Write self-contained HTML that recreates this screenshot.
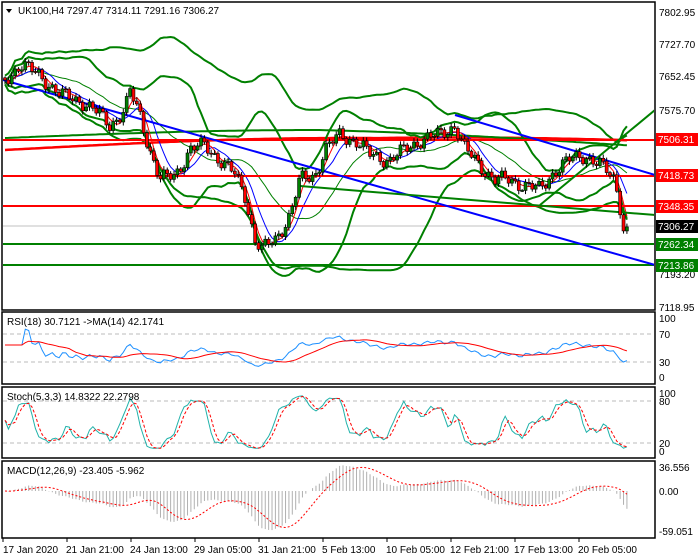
<!DOCTYPE html>
<html><head><meta charset="utf-8"><style>
html,body{margin:0;padding:0;background:#fff;}
body{width:700px;height:560px;overflow:hidden;font-family:"Liberation Sans",sans-serif;}
svg{display:block}
text{font-family:"Liberation Sans",sans-serif;font-size:10px;fill:#000}
</style></head><body>
<svg id="s" width="700" height="560" viewBox="0 0 700 560" xmlns="http://www.w3.org/2000/svg">
<rect width="700" height="560" fill="#fff"/>
<g id="plot"></g>
<g fill="none" stroke="#000" stroke-width="1.5">
<rect x="2" y="2" width="653" height="308"/>
<rect x="2" y="312" width="653" height="72"/>
<rect x="2" y="387" width="653" height="71"/>
<rect x="2" y="461" width="653" height="77"/>
</g>
<g stroke="#bbb" stroke-dasharray="4,3" stroke-width="1">
<line x1="3" y1="334" x2="654" y2="334"/><line x1="3" y1="362" x2="654" y2="362"/>
<line x1="3" y1="401" x2="654" y2="401"/><line x1="3" y1="443" x2="654" y2="443"/>
</g>
<g id="ind"></g>
<path d="M6 9 L12 9 L9 13 Z" fill="#000"/>
<text x="18" y="14">UK100,H4  7297.47 7314.11 7291.16 7306.27</text>
<text x="7" y="325">RSI(18) 30.7121  -&gt;MA(14) 42.1741</text>
<text x="7" y="400">Stoch(5,3,3) 14.8322 22.2798</text>
<text x="7" y="474">MACD(12,26,9) -23.405 -5.962</text>
<g>
<text x="659" y="16">7802.95</text>
<text x="659" y="48">7727.70</text>
<text x="659" y="80">7652.45</text>
<text x="659" y="114">7575.70</text>
<text x="659" y="278">7193.20</text>
<text x="659" y="311">7118.95</text>
<text x="659" y="322">100</text><text x="659" y="338">70</text><text x="659" y="366">30</text><text x="659" y="381">0</text>
<text x="659" y="397">100</text><text x="659" y="405">80</text><text x="659" y="447">20</text><text x="659" y="455">0</text>
<text x="659" y="471">36.556</text><text x="659" y="495">0.00</text><text x="659" y="535">-59.051</text>
<rect x="656" y="133" width="42" height="13" fill="#f00"/><text x="658" y="143" style="fill:#fff">7506.31</text>
<rect x="656" y="169" width="42" height="13" fill="#f00"/><text x="658" y="179" style="fill:#fff">7418.73</text>
<rect x="656" y="200" width="42" height="13" fill="#f00"/><text x="658" y="210" style="fill:#fff">7348.35</text>
<rect x="656" y="220" width="42" height="13" fill="#000"/><text x="658" y="230" style="fill:#fff">7306.27</text>
<rect x="656" y="238" width="42" height="13" fill="#008000"/><text x="658" y="248" style="fill:#fff">7262.34</text>
<rect x="656" y="259" width="42" height="13" fill="#008000"/><text x="658" y="269" style="fill:#fff">7213.86</text>
</g>
<g stroke="#000" stroke-width="1">
<line x1="3" y1="538" x2="3" y2="542"/><line x1="67" y1="538" x2="67" y2="542"/><line x1="131" y1="538" x2="131" y2="542"/><line x1="195" y1="538" x2="195" y2="542"/><line x1="259" y1="538" x2="259" y2="542"/><line x1="323" y1="538" x2="323" y2="542"/><line x1="387" y1="538" x2="387" y2="542"/><line x1="451" y1="538" x2="451" y2="542"/><line x1="515" y1="538" x2="515" y2="542"/><line x1="579" y1="538" x2="579" y2="542"/>
</g>
<text x="3" y="553">17 Jan 2020</text><text x="66" y="553">21 Jan 21:00</text><text x="130" y="553">24 Jan 13:00</text><text x="194" y="553">29 Jan 05:00</text><text x="258" y="553">31 Jan 21:00</text><text x="322" y="553">5 Feb 13:00</text><text x="386" y="553">10 Feb 05:00</text><text x="450" y="553">12 Feb 21:00</text><text x="514" y="553">17 Feb 13:00</text><text x="578" y="553">20 Feb 05:00</text>
</svg>
<script>
(function(){
var NS="http://www.w3.org/2000/svg";
var plot=document.getElementById('plot'),ind=document.getElementById('ind');
function el(p,n,a){var e=document.createElementNS(NS,n);for(var k in a)e.setAttribute(k,a[k]);p.appendChild(e);return e;}
function pl(p,pts,st,w,extra){var d=pts.map(function(q){return q[0].toFixed(1)+','+q[1].toFixed(1)}).join(' ');var a={points:d,fill:'none',stroke:st,'stroke-width':w};for(var k in extra)a[k]=extra[k];return el(p,'polyline',a);}
var wp=[[5,80],[20,65],[40,75],[60,95],[80,100],[100,115],[110,125],[125,110],[130,92],[140,115],[150,150],[160,180],[175,175],[190,150],[205,145],[220,160],[235,175],[245,195],[255,240],[262,250],[275,240],[290,215],[300,180],[315,175],[325,150],[340,135],[355,140],[370,155],[390,160],[405,150],[420,140],[440,135],[455,125],[465,150],[480,165],[495,180],[510,180],[525,185],[540,190],[555,170],[570,160],[585,155],[600,165],[615,180],[622,215],[627,255]];
function iy(x){for(var i=1;i<wp.length;i++){if(x<=wp[i][0]){var a=wp[i-1],b=wp[i];return a[1]+(b[1]-a[1])*(x-a[0])/(b[0]-a[0]);}}return wp[wp.length-1][1];}
function P(y){return 7802.95-(y-12)/0.4327;}function Y(p){return 12+(7802.95-p)*0.4327;}
var N=185,X=[],C=[],O=[],H=[],L=[];
for(var i=0;i<N;i++){var x=5+i*3.38;X.push(x);var y=iy(x)+5*Math.sin(i*1.7)+4*Math.sin(i*0.63);C.push(P(y));}
C[N-1]=7306.27;C[N-2]=7297;
for(i=0;i<N;i++){O.push(i?C[i-1]:C[0]+5);var r1=3+6*Math.abs(Math.sin(i*2.3)),r2=3+6*Math.abs(Math.cos(i*1.9));H.push(Math.max(O[i],C[i])+r1);L.push(Math.min(O[i],C[i])-r2);}
var cp=el(document.getElementById('s'),'clipPath',{id:'cm'});el(cp,'rect',{x:3,y:3,width:651,height:306});
var g=el(plot,'g',{'clip-path':'url(#cm)'});
el(g,'line',{x1:3,y1:226,x2:654,y2:226,stroke:'#c0c0c0','stroke-width':1});
function sma(a,n){var o=[];for(var i=0;i<a.length;i++){var s=0,c=0;for(var j=Math.max(0,i-n+1);j<=i;j++){s+=a[j];c++;}o.push(s/c);}return o;}
function sd(a,m,n){var o=[];for(var i=0;i<a.length;i++){var s=0,c=0;for(var j=Math.max(0,i-n+1);j<=i;j++){s+=(a[j]-m[i])*(a[j]-m[i]);c++;}o.push(Math.sqrt(s/c));}return o;}
function ser(a,f){return a.map(function(v,i){return [X[i],f(v)];});}
var m50=sma(C,45),s50=sd(C,m50,45);
pl(g,ser(m50.map(function(v,i){return v+2.2*s50[i]+10}),Y),'#008000',2);
pl(g,ser(m50.map(function(v,i){return v-2.2*s50[i]-10}),Y),'#008000',2);
var red=[],grn=[];for(i=0;i<N;i++){var t=i/N;red.push([X[i],150-12*Math.sin(t*Math.PI*0.9)+ (t>0.6?-(t-0.6)*15:0)]);grn.push([X[i],138-8*Math.sin(t*Math.PI)+(t>0.5?(t-0.5)*15:0)]);}
pl(g,red,'#f00',2.5);pl(g,grn,'#008000',2);
var m20=sma(C,20),s20=sd(C,m20,20);
pl(g,ser(m20.map(function(v,i){return v+2*s20[i]}),Y),'#008000',2);
pl(g,ser(m20.map(function(v,i){return v-2*s20[i]}),Y),'#008000',2);
pl(g,ser(m20,Y),'#008000',1);
pl(g,ser(sma(C,8),Y),'#0000ff',1);
pl(g,ser(sma(C,4),Y),'#f00',1);
[[140,'#f00'],[176,'#f00'],[206,'#f00'],[244,'#008000'],[265,'#008000']].forEach(function(l){el(g,'line',{x1:3,y1:l[0],x2:654,y2:l[0],stroke:l[1],'stroke-width':2});});
el(g,'line',{x1:3,y1:80,x2:655,y2:265,stroke:'#0000ff','stroke-width':2});
el(g,'line',{x1:455,y1:115,x2:655,y2:175,stroke:'#0000ff','stroke-width':2});
el(g,'line',{x1:300,y1:186,x2:655,y2:215,stroke:'#008000','stroke-width':2});
el(g,'line',{x1:540,y1:205,x2:655,y2:110,stroke:'#008000','stroke-width':2});
for(i=0;i<N;i++){var x=X[i];el(g,'line',{x1:x,y1:Y(H[i]),x2:x,y2:Y(L[i]),stroke:'#000','stroke-width':1});var t=Y(Math.max(O[i],C[i])),b=Y(Math.min(O[i],C[i]));el(g,'rect',{x:x-1.5,y:t,width:3,height:Math.max(1,b-t),fill:C[i]>=O[i]?'#008000':'#f00',stroke:'#000','stroke-width':0.6});}
function rsi(n){var o=[],ag=0,al=0;for(var i=0;i<N;i++){var d=i?C[i]-C[i-1]:0;var gg=Math.max(d,0),ll=Math.max(-d,0);ag=(ag*(n-1)+gg)/n;al=(al*(n-1)+ll)/n;o.push(al+ag?100*ag/(ag+al):50);}return o;}
var R=rsi(18);for(i=0;i<6;i++)R[i]=55;var RM=sma(R,14);
pl(ind,ser(R,function(v){return 378-v*0.6}),'#1e90ff',1);
pl(ind,ser(RM,function(v){return 378-v*0.6}),'#f00',1);
var K=[];for(i=0;i<N;i++){var hh=-1e9,lll=1e9;for(var j=Math.max(0,i-4);j<=i;j++){hh=Math.max(hh,H[j]);lll=Math.min(lll,L[j]);}K.push(100*(C[i]-lll)/(hh-lll));}
K=sma(K,3);var D=sma(K,3);
pl(ind,ser(K,function(v){return 451-v*0.58}),'#20b2aa',1);
pl(ind,ser(D,function(v){return 451-v*0.58}),'#f00',1,{'stroke-dasharray':'3,2'});
function ema(a,n){var k=2/(n+1),o=[a[0]];for(var i=1;i<a.length;i++)o.push(a[i]*k+o[i-1]*(1-k));return o;}
var e12=ema(C,12),e26=ema(C,26),M=C.map(function(v,i){return e12[i]-e26[i]}),S=sma(M,9);
for(i=0;i<N;i++){var yy=491-M[i]*0.66;yy=Math.max(462,Math.min(537,yy));el(ind,'line',{x1:X[i],y1:491,x2:X[i],y2:yy,stroke:'#b0b0b0','stroke-width':1});}
pl(ind,ser(S,function(v){return Math.max(462,Math.min(537,491-v*0.66))}),'#f00',1,{'stroke-dasharray':'2,2'});
})();
</script>
</body></html>
